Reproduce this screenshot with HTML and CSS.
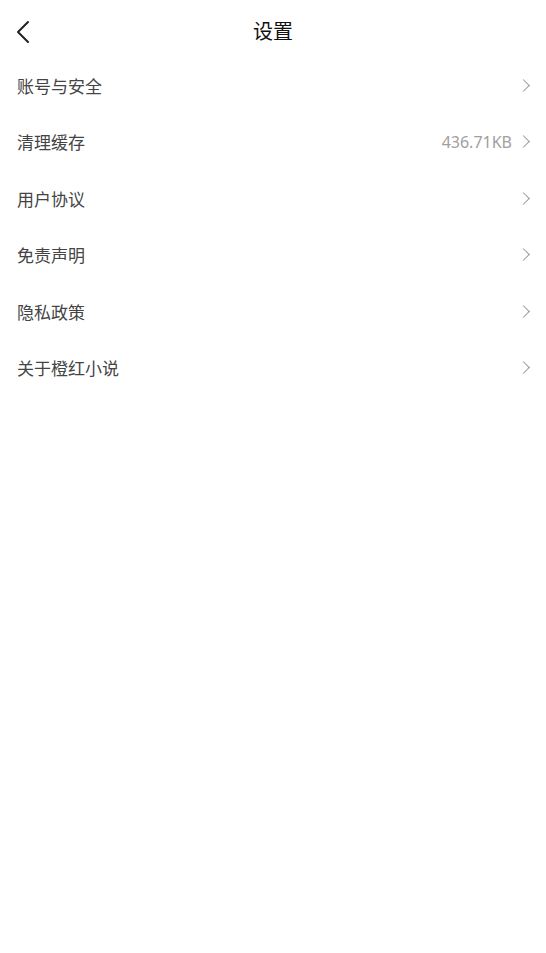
FILE: index.html
```html
<!DOCTYPE html>
<html lang="zh-CN">
<head>
    <meta charset="UTF-8">
    <meta name="viewport" content="width=device-width, initial-scale=1.0">
    <title>设置</title>
    <link rel="stylesheet" href="styles.css">
</head>
<body>
    <div class="header">
        <span class="back">
            <svg width="16" height="24" viewBox="0 0 16 24"><path d="M13 2 L3 12 L13 22" fill="none" stroke="#222" stroke-width="2" stroke-linecap="round" stroke-linejoin="round"/></svg>
        </span>
        <h1>设置</h1>
    </div>

    <ul class="menu">
        <li class="menu-item"><span class="label">账号与安全</span><span class="arrow"></span></li>
        <li class="menu-item"><span class="label">清理缓存</span><span class="value">436.71KB</span><span class="arrow"></span></li>
        <li class="menu-item"><span class="label">用户协议</span><span class="arrow"></span></li>
        <li class="menu-item"><span class="label">免责声明</span><span class="arrow"></span></li>
        <li class="menu-item"><span class="label">隐私政策</span><span class="arrow"></span></li>
        <li class="menu-item"><span class="label">关于橙红小说</span><span class="arrow"></span></li>
    </ul>
</body>
</html>
```

FILE: styles.css
```css
/* General Styles */
body {
    margin: 0;
    padding: 0;
    background: #fff;
    font-family: "Noto Sans CJK SC", "Noto Sans", sans-serif;
    color: #333;
}

.header {
    position: relative;
    height: 57px;
    display: flex;
    align-items: center;
    justify-content: center;
}

.header h1 {
    margin: 3px 0 0;
    font-size: 20px;
    font-weight: normal;
    color: #111;
}

.back {
    position: absolute;
    left: 15px;
    top: 20px;
    display: flex;
}

.menu {
    list-style: none;
    margin: 0;
    padding: 0;
}

.menu-item {
    height: 56.5px;
    display: flex;
    align-items: center;
    padding: 0 17px;
}

.label {
    flex: 1;
    font-size: 17px;
    color: #444;
}

.value {
    font-family: "Noto Sans", sans-serif;
    font-size: 16px;
    color: #a0a0a0;
    margin-right: 7px;
}

.arrow {
    width: 8px;
    height: 8px;
    border-top: 1.3px solid #999;
    border-right: 1.3px solid #999;
    transform: rotate(45deg);
    margin-right: 1px;
}
```
